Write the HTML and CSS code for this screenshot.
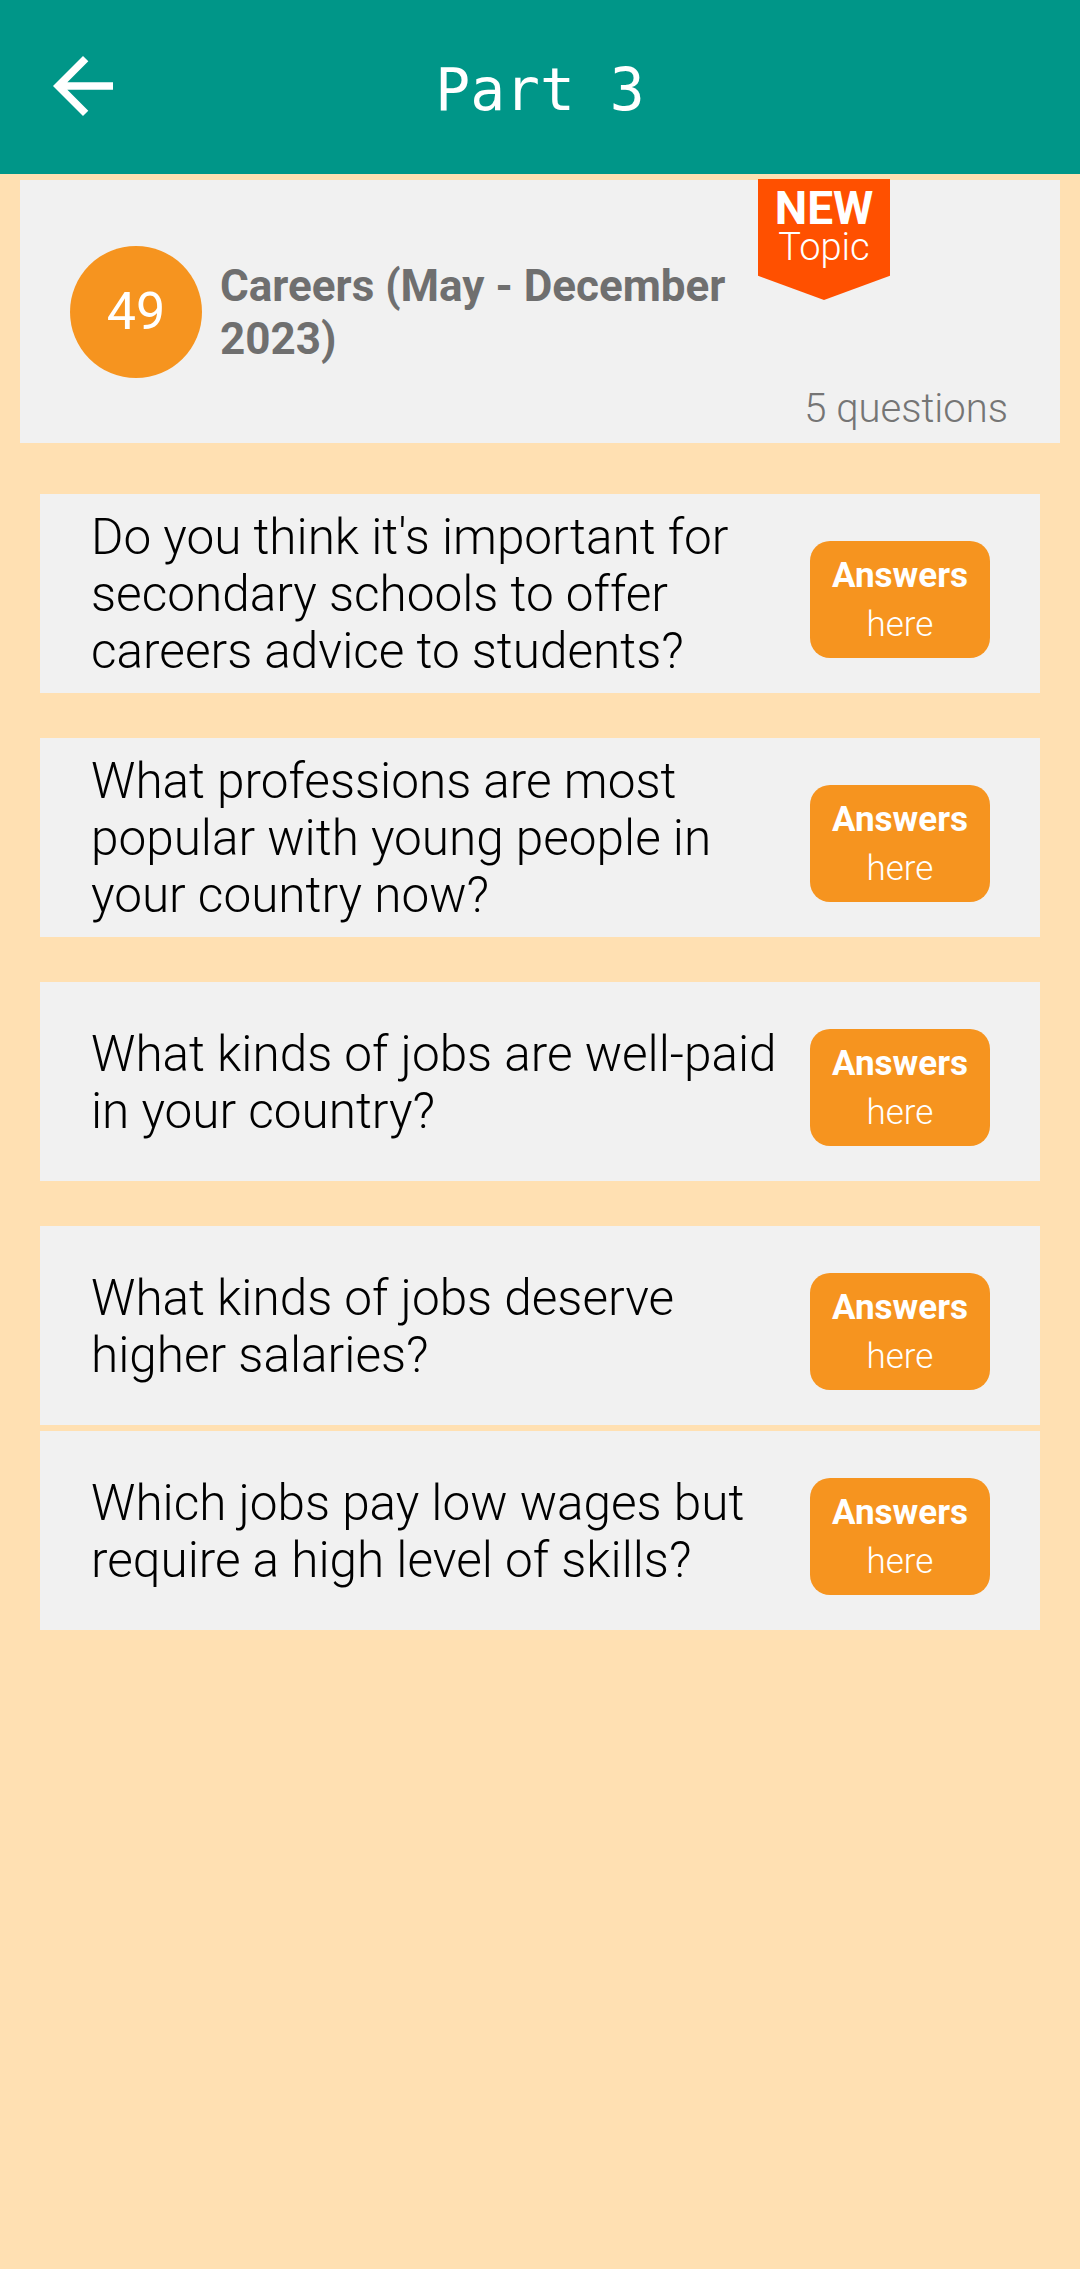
FILE: index.html
```html
<!DOCTYPE html>
<html lang="en">
<head>
<meta charset="utf-8">
<title>Part 3</title>
<link rel="stylesheet" href="styles.css">
</head>
<body>
<header class="app-bar">
  <div class="app-bar-left">
    <svg class="back-icon" viewBox="0 0 24 24" aria-hidden="true"><path d="M20 11H7.83l5.59-5.59L12 4l-8 8 8 8 1.41-1.41L7.83 13H20v-2z"/></svg>
  </div>
  <h1 class="app-title">Part 3</h1>
  <div class="app-bar-right"></div>
</header>

<main class="content">
  <section class="topic-card">
    <div class="topic-main">
      <div class="topic-num">49</div>
      <h2 class="topic-title">Careers (May - December 2023)</h2>
    </div>
    <div class="topic-count">5 questions</div>
    <div class="ribbon"><span class="ribbon-new">NEW</span><span class="ribbon-topic">Topic</span></div>
  </section>

  <ul class="questions">
    <li class="q-row">
      <p class="q-text">Do you think it's important for secondary schools to offer careers advice to students?</p>
      <a class="answer-btn"><span class="answer-top">Answers</span><span class="answer-bottom">here</span></a>
    </li>
    <li class="q-row">
      <p class="q-text">What professions are most popular with young people in your country now?</p>
      <a class="answer-btn"><span class="answer-top">Answers</span><span class="answer-bottom">here</span></a>
    </li>
    <li class="q-row">
      <p class="q-text">What kinds of jobs are well-paid in your country?</p>
      <a class="answer-btn"><span class="answer-top">Answers</span><span class="answer-bottom">here</span></a>
    </li>
    <li class="q-row">
      <p class="q-text">What kinds of jobs deserve higher salaries?</p>
      <a class="answer-btn"><span class="answer-top">Answers</span><span class="answer-bottom">here</span></a>
    </li>
    <li class="q-row q-row-tight">
      <p class="q-text">Which jobs pay low wages but require a high level of skills?</p>
      <a class="answer-btn"><span class="answer-top">Answers</span><span class="answer-bottom">here</span></a>
    </li>
  </ul>
</main>
</body>
</html>
```

FILE: styles.css
```css
* { box-sizing: border-box; }

html, body {
  margin: 0;
  padding: 0;
}

body {
  background: #FFE0B2;
  min-height: 2269px;
  font-family: Roboto, "Noto Sans", "Liberation Sans", sans-serif;
}

.app-bar {
  height: 174px;
  background: #009688;
  display: grid;
  grid-template-columns: 1fr auto 1fr;
  align-items: center;
}

.app-bar-left {
  display: flex;
  align-items: center;
}

.back-icon {
  width: 90px;
  height: 90px;
  margin-left: 38px;
  margin-top: -2px;
  fill: #ffffff;
}

.app-title {
  margin: 0;
  padding-top: 6px;
  font-family: "DejaVu Sans Mono", "Liberation Mono", monospace;
  font-weight: 400;
  font-size: 58px;
  color: #ffffff;
  white-space: pre;
}

.content {
  padding: 6px 20px 0;
}

.topic-card {
  position: relative;
  height: 263px;
  background: #F1F1F1;
  display: grid;
  padding: 0 52px 0 50px;
}

.topic-main {
  grid-area: 1 / 1;
  align-self: center;
  display: flex;
  align-items: center;
  gap: 18px;
}

.topic-num {
  flex: none;
  width: 132px;
  height: 132px;
  border-radius: 50%;
  background: #F6941F;
  color: #ffffff;
  font-size: 52px;
  font-weight: 400;
  display: flex;
  align-items: center;
  justify-content: center;
}

.topic-title {
  margin: 2px 0 0;
  max-width: 535px;
  font-size: 44px;
  line-height: 53px;
  font-weight: 700;
  color: #6F6F6F;
}

.topic-count {
  grid-area: 1 / 1;
  justify-self: end;
  align-self: end;
  margin-bottom: 11px;
  font-size: 40px;
  font-weight: 300;
  color: #757575;
}

.ribbon {
  position: absolute;
  left: 738px;
  top: -1px;
  width: 132px;
  height: 121px;
  background: #FF5000;
  clip-path: polygon(0 0, 100% 0, 100% 80%, 50% 100%, 0 80%);
  display: flex;
  flex-direction: column;
  align-items: center;
  padding-top: 7px;
  color: #ffffff;
}

.ribbon-new {
  font-size: 46px;
  line-height: 44px;
  font-weight: 700;
}

.ribbon-topic {
  font-size: 38px;
  line-height: 34px;
  font-weight: 300;
}

.questions {
  list-style: none;
  margin: 51px 0 0;
  padding: 0 20px;
}

.q-row {
  height: 199px;
  background: #F1F1F1;
  display: flex;
  align-items: center;
  padding: 2px 50px 0 51px;
  margin-top: 45px;
}

.q-row:first-child {
  margin-top: 0;
}

.q-row-tight {
  margin-top: 6px;
}

.q-text {
  flex: 1;
  margin: 0 20px 0 0;
  font-size: 49.5px;
  line-height: 57px;
  font-weight: 300;
  color: #000000;
}

.answer-btn {
  flex: none;
  width: 180px;
  height: 117px;
  margin-top: 10px;
  border-radius: 20px;
  background: #F6941F;
  color: #ffffff;
  display: flex;
  flex-direction: column;
  align-items: center;
  padding-top: 10px;
  font-size: 35px;
  line-height: 49px;
}

.answer-top {
  font-weight: 700;
}

.answer-bottom {
  font-weight: 300;
}
```
